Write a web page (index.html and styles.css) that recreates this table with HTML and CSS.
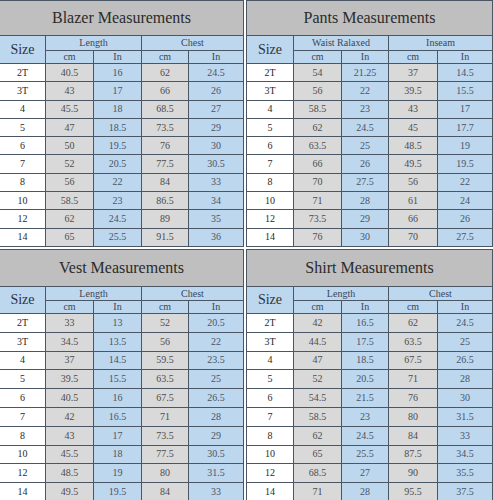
FILE: index.html
```html
<!DOCTYPE html>
<html lang="en">
<head>
    <meta charset="UTF-8">
    <meta name="viewport" content="width=device-width, initial-scale=1.0">
    <title>Size Charts</title>
    <link rel="stylesheet" href="styles.css">
</head>
<body>
    <div class="charts">
        <table class="chart top left">
            <colgroup><col style="width:46px"><col style="width:48px"><col style="width:48px"><col style="width:47px"><col></colgroup>
            <tr class="title-row"><th class="title" colspan="5">Blazer Measurements</th></tr>
            <tr class="head1"><th class="size-head" rowspan="2">Size</th><th colspan="2">Length</th><th colspan="2">Chest</th></tr>
            <tr class="head2"><th>cm</th><th>In</th><th>cm</th><th>In</th></tr>
            <tr><td class="size">2T</td><td class="cm">40.5</td><td class="in">16</td><td class="cm">62</td><td class="in">24.5</td></tr>
            <tr><td class="size">3T</td><td class="cm">43</td><td class="in">17</td><td class="cm">66</td><td class="in">26</td></tr>
            <tr><td class="size">4</td><td class="cm">45.5</td><td class="in">18</td><td class="cm">68.5</td><td class="in">27</td></tr>
            <tr><td class="size">5</td><td class="cm">47</td><td class="in">18.5</td><td class="cm">73.5</td><td class="in">29</td></tr>
            <tr><td class="size">6</td><td class="cm">50</td><td class="in">19.5</td><td class="cm">76</td><td class="in">30</td></tr>
            <tr><td class="size">7</td><td class="cm">52</td><td class="in">20.5</td><td class="cm">77.5</td><td class="in">30.5</td></tr>
            <tr><td class="size">8</td><td class="cm">56</td><td class="in">22</td><td class="cm">84</td><td class="in">33</td></tr>
            <tr><td class="size">10</td><td class="cm">58.5</td><td class="in">23</td><td class="cm">86.5</td><td class="in">34</td></tr>
            <tr><td class="size">12</td><td class="cm">62</td><td class="in">24.5</td><td class="cm">89</td><td class="in">35</td></tr>
            <tr><td class="size">14</td><td class="cm">65</td><td class="in">25.5</td><td class="cm">91.5</td><td class="in">36</td></tr>
        </table>

        <table class="chart top right">
            <colgroup><col style="width:47px"><col style="width:48px"><col style="width:47px"><col style="width:49px"><col></colgroup>
            <tr class="title-row"><th class="title" colspan="5">Pants Measurements</th></tr>
            <tr class="head1"><th class="size-head" rowspan="2">Size</th><th colspan="2">Waist Ralaxed</th><th colspan="2">Inseam</th></tr>
            <tr class="head2"><th>cm</th><th>In</th><th>cm</th><th>In</th></tr>
            <tr><td class="size">2T</td><td class="cm">54</td><td class="in">21.25</td><td class="cm">37</td><td class="in">14.5</td></tr>
            <tr><td class="size">3T</td><td class="cm">56</td><td class="in">22</td><td class="cm">39.5</td><td class="in">15.5</td></tr>
            <tr><td class="size">4</td><td class="cm">58.5</td><td class="in">23</td><td class="cm">43</td><td class="in">17</td></tr>
            <tr><td class="size">5</td><td class="cm">62</td><td class="in">24.5</td><td class="cm">45</td><td class="in">17.7</td></tr>
            <tr><td class="size">6</td><td class="cm">63.5</td><td class="in">25</td><td class="cm">48.5</td><td class="in">19</td></tr>
            <tr><td class="size">7</td><td class="cm">66</td><td class="in">26</td><td class="cm">49.5</td><td class="in">19.5</td></tr>
            <tr><td class="size">8</td><td class="cm">70</td><td class="in">27.5</td><td class="cm">56</td><td class="in">22</td></tr>
            <tr><td class="size">10</td><td class="cm">71</td><td class="in">28</td><td class="cm">61</td><td class="in">24</td></tr>
            <tr><td class="size">12</td><td class="cm">73.5</td><td class="in">29</td><td class="cm">66</td><td class="in">26</td></tr>
            <tr><td class="size">14</td><td class="cm">76</td><td class="in">30</td><td class="cm">70</td><td class="in">27.5</td></tr>
        </table>

        <table class="chart bottom left">
            <colgroup><col style="width:46px"><col style="width:48px"><col style="width:48px"><col style="width:47px"><col></colgroup>
            <tr class="title-row"><th class="title" colspan="5">Vest Measurements</th></tr>
            <tr class="head1"><th class="size-head" rowspan="2">Size</th><th colspan="2">Length</th><th colspan="2">Chest</th></tr>
            <tr class="head2"><th>cm</th><th>In</th><th>cm</th><th>In</th></tr>
            <tr><td class="size">2T</td><td class="cm">33</td><td class="in">13</td><td class="cm">52</td><td class="in">20.5</td></tr>
            <tr><td class="size">3T</td><td class="cm">34.5</td><td class="in">13.5</td><td class="cm">56</td><td class="in">22</td></tr>
            <tr><td class="size">4</td><td class="cm">37</td><td class="in">14.5</td><td class="cm">59.5</td><td class="in">23.5</td></tr>
            <tr><td class="size">5</td><td class="cm">39.5</td><td class="in">15.5</td><td class="cm">63.5</td><td class="in">25</td></tr>
            <tr><td class="size">6</td><td class="cm">40.5</td><td class="in">16</td><td class="cm">67.5</td><td class="in">26.5</td></tr>
            <tr><td class="size">7</td><td class="cm">42</td><td class="in">16.5</td><td class="cm">71</td><td class="in">28</td></tr>
            <tr><td class="size">8</td><td class="cm">43</td><td class="in">17</td><td class="cm">73.5</td><td class="in">29</td></tr>
            <tr><td class="size">10</td><td class="cm">45.5</td><td class="in">18</td><td class="cm">77.5</td><td class="in">30.5</td></tr>
            <tr><td class="size">12</td><td class="cm">48.5</td><td class="in">19</td><td class="cm">80</td><td class="in">31.5</td></tr>
            <tr><td class="size">14</td><td class="cm">49.5</td><td class="in">19.5</td><td class="cm">84</td><td class="in">33</td></tr>
        </table>

        <table class="chart bottom right">
            <colgroup><col style="width:47px"><col style="width:48px"><col style="width:47px"><col style="width:49px"><col></colgroup>
            <tr class="title-row"><th class="title" colspan="5">Shirt Measurements</th></tr>
            <tr class="head1"><th class="size-head" rowspan="2">Size</th><th colspan="2">Length</th><th colspan="2">Chest</th></tr>
            <tr class="head2"><th>cm</th><th>In</th><th>cm</th><th>In</th></tr>
            <tr><td class="size">2T</td><td class="cm">42</td><td class="in">16.5</td><td class="cm">62</td><td class="in">24.5</td></tr>
            <tr><td class="size">3T</td><td class="cm">44.5</td><td class="in">17.5</td><td class="cm">63.5</td><td class="in">25</td></tr>
            <tr><td class="size">4</td><td class="cm">47</td><td class="in">18.5</td><td class="cm">67.5</td><td class="in">26.5</td></tr>
            <tr><td class="size">5</td><td class="cm">52</td><td class="in">20.5</td><td class="cm">71</td><td class="in">28</td></tr>
            <tr><td class="size">6</td><td class="cm">54.5</td><td class="in">21.5</td><td class="cm">76</td><td class="in">30</td></tr>
            <tr><td class="size">7</td><td class="cm">58.5</td><td class="in">23</td><td class="cm">80</td><td class="in">31.5</td></tr>
            <tr><td class="size">8</td><td class="cm">62</td><td class="in">24.5</td><td class="cm">84</td><td class="in">33</td></tr>
            <tr><td class="size">10</td><td class="cm">65</td><td class="in">25.5</td><td class="cm">87.5</td><td class="in">34.5</td></tr>
            <tr><td class="size">12</td><td class="cm">68.5</td><td class="in">27</td><td class="cm">90</td><td class="in">35.5</td></tr>
            <tr><td class="size">14</td><td class="cm">71</td><td class="in">28</td><td class="cm">95.5</td><td class="in">37.5</td></tr>
        </table>
    </div>
</body>
</html>
```

FILE: styles.css
```css
* { box-sizing: border-box; margin: 0; padding: 0; }
html, body { width: 493px; height: 500px; overflow: hidden; background: #fff; }
body, table, th, td { font-family: "Liberation Serif", "DejaVu Serif", serif; }

.charts {
    display: grid;
    grid-template-columns: 244px 247px;
    grid-template-rows: 246px 252px;
    column-gap: 2px;
    row-gap: 3px;
}

.chart {
    width: 100%;
    border-collapse: collapse;
    table-layout: fixed;
    text-align: center;
}
.chart.left { margin-left: -1px; width: calc(100% + 1px); }
.chart th, .chart td {
    border: 1px solid #4a5664;
    padding: 0;
    line-height: 1;
    overflow: hidden;
    white-space: nowrap;
}

.title {
    background: #bfbfbf;
    color: #2b2b2b;
    font-size: 16px;
    font-weight: normal;
    border-color: #9a9a9a #9a9a9a #4a5664;
}
.top .title-row { height: 35px; }
.bottom .title-row { height: 37px; }

.head1 th, .head2 th {
    background: #bdd7ee;
    color: #3b4656;
    font-weight: normal;
    font-size: 10px;
}
.head1 { height: 15px; }
.bottom .head1 { height: 14px; }
.head2 { height: 13px; }
.chart .size-head { font-size: 14px; color: #2e3340; }

.chart td { font-size: 10px; color: #4d4d4d; }
.top tr td { height: 18.3px; }
.bottom tr td { height: 18.8px; }
.size { background: #fff; color: #2a2a2a !important; }
.cm { background: #d9d9d9; }
.in { background: #bdd7ee; color: #4a5566 !important; }
```
